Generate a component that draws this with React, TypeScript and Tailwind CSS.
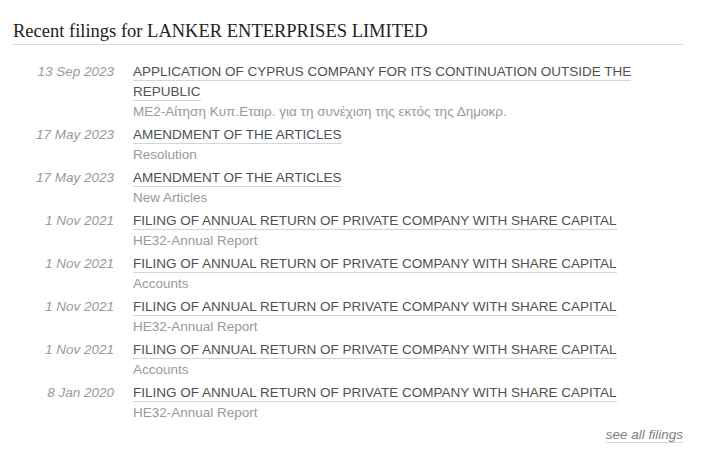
const filings = [
  {
    date: "13 Sep 2023",
    title: "APPLICATION OF CYPRUS COMPANY FOR ITS CONTINUATION OUTSIDE THE REPUBLIC",
    sub: "ME2-Αίτηση Κυπ.Εταιρ. για τη συνέχιση της εκτός της Δημοκρ.",
  },
  { date: "17 May 2023", title: "AMENDMENT OF THE ARTICLES", sub: "Resolution" },
  { date: "17 May 2023", title: "AMENDMENT OF THE ARTICLES", sub: "New Articles" },
  { date: "1 Nov 2021", title: "FILING OF ANNUAL RETURN OF PRIVATE COMPANY WITH SHARE CAPITAL", sub: "HE32-Annual Report" },
  { date: "1 Nov 2021", title: "FILING OF ANNUAL RETURN OF PRIVATE COMPANY WITH SHARE CAPITAL", sub: "Accounts" },
  { date: "1 Nov 2021", title: "FILING OF ANNUAL RETURN OF PRIVATE COMPANY WITH SHARE CAPITAL", sub: "HE32-Annual Report" },
  { date: "1 Nov 2021", title: "FILING OF ANNUAL RETURN OF PRIVATE COMPANY WITH SHARE CAPITAL", sub: "Accounts" },
  { date: "8 Jan 2020", title: "FILING OF ANNUAL RETURN OF PRIVATE COMPANY WITH SHARE CAPITAL", sub: "HE32-Annual Report" },
];

export default function App() {
  return (
    <div className="w-[726px] h-[455px] bg-white pl-[13px] pt-[18px] [font-family:'Liberation_Sans',Arial,sans-serif]">
      <div className="w-[670px]">
        {/* Header */}
        <h2 className="text-[18.5px] leading-[26px] text-[#222] border-b border-[#dcdcdc] [font-family:'Liberation_Serif','Times_New_Roman',serif]">
          Recent filings for LANKER ENTERPRISES LIMITED
        </h2>

        {/* Filings list */}
        <div className="mt-[17px] flex flex-col gap-[3px]">
          {filings.map((f, i) => (
            <div key={i} className="flex text-[13.5px] leading-[20px]">
              <div className="w-[101px] shrink-0 text-right italic text-[#9a9a9a]">{f.date}</div>
              <div className="ml-[19px] w-[520px]">
                <div>
                  <a href="#" className="text-[#505050] border-b border-[#c9d9df] pb-[1px]">
                    {f.title}
                  </a>
                </div>
                <div className="text-[#999]">{f.sub}</div>
              </div>
            </div>
          ))}
        </div>

        <div className="mt-[2px] text-right text-[13.5px] leading-[20px]">
          <a href="#" className="italic text-[#7a7f86] border-b border-[#c9d9df]">
            see all filings
          </a>
        </div>
      </div>
    </div>
  );
}
